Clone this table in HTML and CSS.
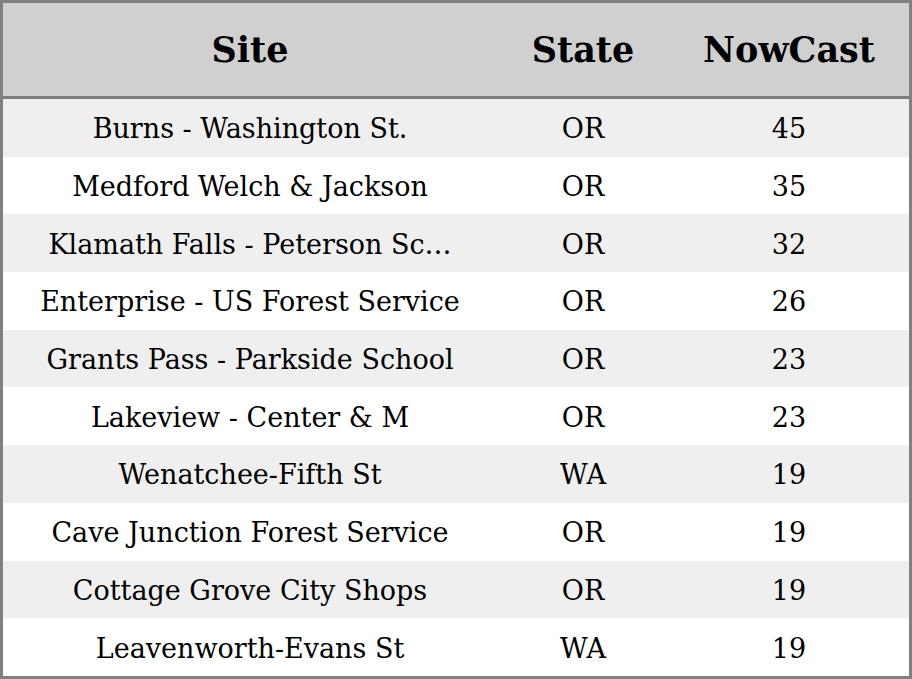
FILE: index.html
```html
<!DOCTYPE html>
<html>
<head>
<meta charset="utf-8">
<link rel="stylesheet" href="styles.css">
</head>
<body>
<table class="aq">
  <thead>
    <tr><th class="c-site">Site</th><th class="c-state">State</th><th class="c-nc">NowCast</th></tr>
  </thead>
  <tbody>
    <tr><td>Burns - Washington St.</td><td>OR</td><td>45</td></tr>
    <tr><td>Medford Welch &amp; Jackson</td><td>OR</td><td>35</td></tr>
    <tr><td>Klamath Falls - Peterson Sc…</td><td>OR</td><td>32</td></tr>
    <tr><td>Enterprise - US Forest Service</td><td>OR</td><td>26</td></tr>
    <tr><td>Grants Pass - Parkside School</td><td>OR</td><td>23</td></tr>
    <tr><td>Lakeview - Center &amp; M</td><td>OR</td><td>23</td></tr>
    <tr><td>Wenatchee-Fifth St</td><td>WA</td><td>19</td></tr>
    <tr><td>Cave Junction Forest Service</td><td>OR</td><td>19</td></tr>
    <tr><td>Cottage Grove City Shops</td><td>OR</td><td>19</td></tr>
    <tr><td>Leavenworth-Evans St</td><td>WA</td><td>19</td></tr>
  </tbody>
</table>
</body>
</html>
```
FILE: styles.css
```css
html, body {
  margin: 0;
  padding: 0;
  background: #ffffff;
}
.aq {
  width: 912px;
  height: 679px;
  border-collapse: separate;
  border-spacing: 0;
  border: 3px solid #808080;
  box-sizing: border-box;
  font-family: "DejaVu Serif", serif;
  color: #000;
  table-layout: fixed;
}
.aq th {
  background: #d0d0d0;
  font-weight: bold;
  font-size: 35px;
  height: 93px;
  padding: 0;
  border-bottom: 3px solid #808080;
  text-align: center;
}
.c-site { width: 494px; }
.c-state { width: 172px; }
.c-nc { width: 240px; }
.aq td {
  font-size: 27px;
  height: 57.7px;
  padding: 2px 0 0 0;
  box-sizing: border-box;
  text-align: center;
  white-space: nowrap;
}
.aq tbody tr:nth-child(odd) td {
  background: #efefef;
}
```
